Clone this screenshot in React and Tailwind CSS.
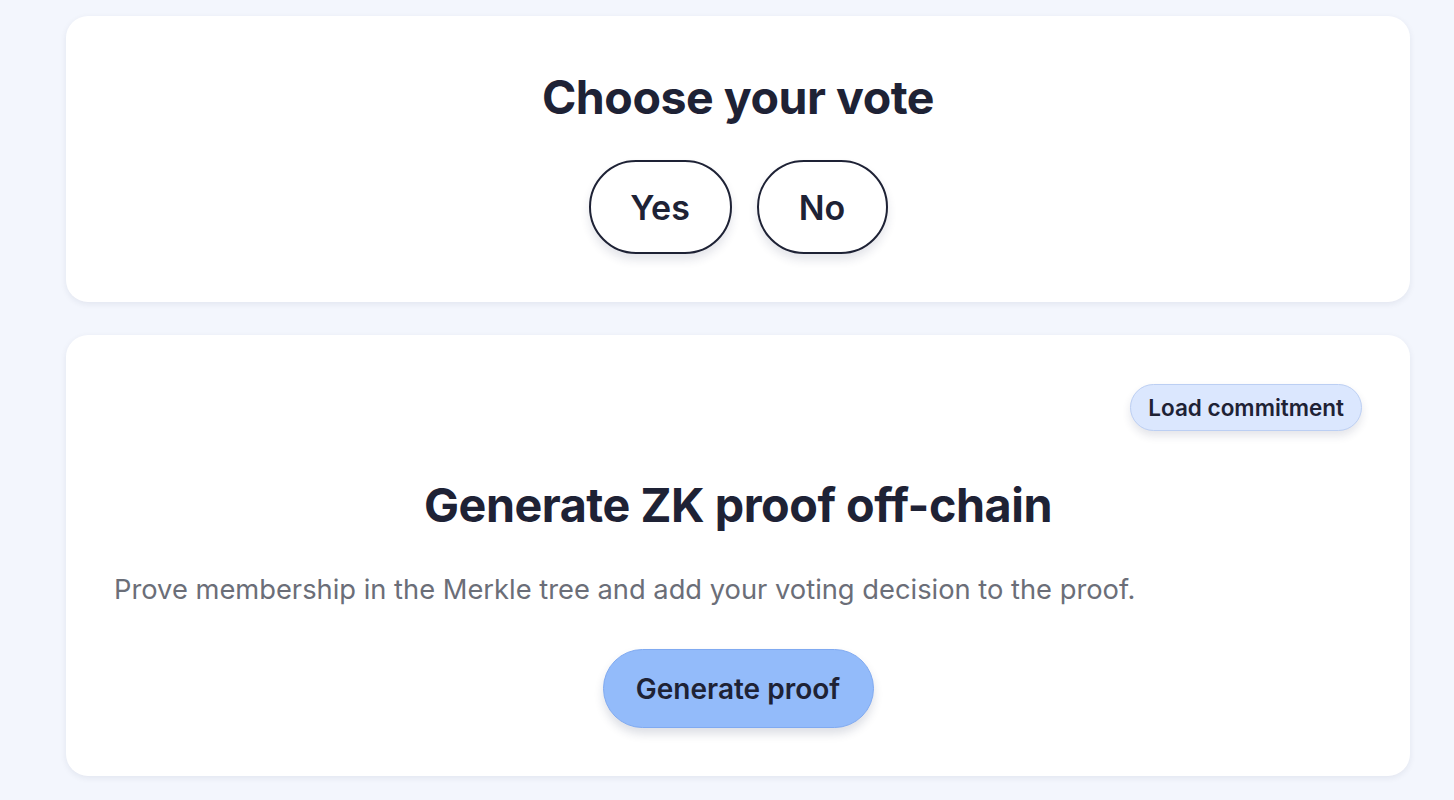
import React, { useState } from 'react';

export default function App() {
    const [vote, setVote] = useState(null);

    return (
        <div className="min-h-screen bg-[#f3f6fd] px-[66px] pt-4 pb-6 font-['Inter',sans-serif] text-[#1e2235]">
            <div className="flex flex-col gap-[33px] w-[1344px]">
                {/* Vote card */}
                <div className="bg-white rounded-[22px] shadow-[0_2px_6px_rgba(30,40,80,0.08)] px-12 pt-[53px] pb-12 flex flex-col items-center">
                    <h1 className="text-[46.5px] leading-[56px] font-bold tracking-[-0.01em]">Choose your vote</h1>
                    <div className="flex gap-[25px] mt-[35px]">
                        <button
                            onClick={() => setVote('yes')}
                            className="w-[143px] h-[94px] rounded-full border-2 border-[#1e2235] bg-white text-[34px] font-semibold shadow-[0_6px_10px_rgba(30,40,80,0.12)]"
                        >
                            Yes
                        </button>
                        <button
                            onClick={() => setVote('no')}
                            className="w-[131px] h-[94px] rounded-full border-2 border-[#1e2235] bg-white text-[34px] font-semibold shadow-[0_6px_10px_rgba(30,40,80,0.12)]"
                        >
                            No
                        </button>
                    </div>
                </div>

                {/* Proof card */}
                <div className="bg-white rounded-[22px] shadow-[0_2px_6px_rgba(30,40,80,0.08)] pt-[49px] px-12 pb-12 flex flex-col">
                    <div className="flex justify-end">
                        <button className="h-[47px] px-[17px] rounded-full bg-[#dbe7fe] border border-[#bccff3] text-[22.5px] font-semibold shadow-[0_5px_8px_rgba(30,40,80,0.12)]">
                            Load commitment
                        </button>
                    </div>
                    <h2 className="text-center text-[46.7px] leading-[56px] font-bold tracking-[-0.01em] mt-[46px]">
                        Generate ZK proof off-chain
                    </h2>
                    <p className="text-[27.3px] leading-[36px] text-[#6b6e78] mt-[39px]">
                        Prove membership in the Merkle tree and add your voting decision to the proof.
                    </p>
                    <div className="flex justify-center mt-[41px]">
                        <button className="w-[271px] h-[79px] rounded-full bg-[#93bbfa] border border-[#80aaf1] text-[28px] font-semibold shadow-[0_6px_10px_rgba(30,40,80,0.15)]">
                            Generate proof
                        </button>
                    </div>
                </div>
            </div>
        </div>
    );
}
